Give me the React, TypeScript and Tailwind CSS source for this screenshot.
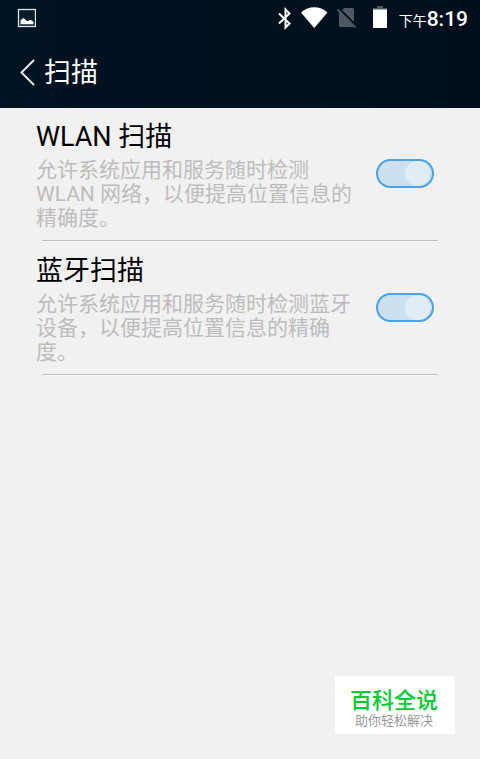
import { useState } from 'react';

type ScanSetting = {
  id: string;
  title: string;
  summary: string;
};

const settings: ScanSetting[] = [
  {
    id: 'wlan-scan',
    title: 'WLAN 扫描',
    summary: '允许系统应用和服务随时检测 WLAN 网络，以便提高位置信息的精确度。',
  },
  {
    id: 'bluetooth-scan',
    title: '蓝牙扫描',
    summary: '允许系统应用和服务随时检测蓝牙设备，以便提高位置信息的精确度。',
  },
];

function StatusBar() {
  return (
    <div className="flex h-9 items-center justify-between pr-3 pl-4 text-white">
      <svg className="h-5 w-5" viewBox="0 0 20 20" aria-hidden="true">
        <rect x="2.5" y="1.5" width="17" height="17" fill="#0a1c29" stroke="#dfe5e7" strokeWidth="1.3" />
        <path d="M4 16H18V17.3H4Z" fill="#4c5962" />
        <path d="M4.5 16V12.5L6 11L7.5 10L9 11.3L10.5 13L12 13L14 12L16 12.5L17.5 14V16Z" fill="#fff" />
      </svg>
      <div className="flex items-center">
        <svg className="h-6 w-4" viewBox="0 0 16 24" fill="none" stroke="#fff" strokeWidth="2" aria-hidden="true">
          <path d="M3 7.5L13.5 17.5L9.5 21.5V3.5L13.5 7.5L3 17.5" />
        </svg>
        <svg className="ml-2 h-6 w-7" viewBox="0 0 28 24" aria-hidden="true">
          <path d="M1 6.5C8.5 -0.5 20 -0.5 27.5 6.5L14.2 22Z" fill="#fff" />
        </svg>
        <svg className="ml-2 h-6 w-5" viewBox="0 0 20 24" aria-hidden="true">
          <path d="M8 2H16.5Q18 2 18 3.5V19.5Q18 21 16.5 21H4.5Q3 21 3 19.5V7Z" fill="#4c5962" />
          <path d="M2.5 2L20 19.5" stroke="#000f1e" strokeWidth="2" />
          <path d="M1.5 3.5L19.5 21.5" stroke="#4c5962" strokeWidth="1.8" />
        </svg>
        <svg className="ml-4 h-6 w-4" viewBox="0 0 16 24" aria-hidden="true">
          <path d="M5 0H11V2H15V4H1V2H5Z" fill="#4c5962" />
          <path d="M1 3.5H15V22H1Z" fill="#fff" />
        </svg>
        <span className="ml-2 flex items-baseline pt-[3px] pl-[3px] leading-6">
          <span className="text-[14px]">下午</span>
          <span className="text-[21px] font-medium">8:19</span>
        </span>
      </div>
    </div>
  );
}

function SettingRow({ setting }: { setting: ScanSetting }) {
  const [enabled, setEnabled] = useState(true);

  return (
    <li>
      <div className="flex gap-4 pt-[13px] pr-[46px] pb-[10px] pl-9">
        <div className="min-w-0 flex-1">
          <label htmlFor={setting.id} className="block text-[27px] leading-8 text-black">
            {setting.title}
          </label>
          <p id={`${setting.id}-summary`} className="mt-[5px] text-[21px] leading-6 text-[#bdbdbd]">
            {setting.summary}
          </p>
        </div>
        <span className="relative mt-[38px] block h-[29px] w-[58px] shrink-0">
          <input
            id={setting.id}
            type="checkbox"
            role="switch"
            aria-describedby={`${setting.id}-summary`}
            checked={enabled}
            onChange={(e) => setEnabled(e.target.checked)}
            className="peer block h-full w-full appearance-none rounded-full border-2 border-[#c4c4c4] bg-[#e4e4e4] checked:border-[#4aa3e8] checked:bg-[#cce0f0]"
          />
          <span className="pointer-events-none absolute top-[2px] left-1 h-[25px] w-[25px] rounded-full bg-[#e1ecf5] peer-checked:right-1 peer-checked:left-auto" />
        </span>
      </div>
      <div className="mr-[42px] ml-[42px] h-[2px] border-t border-[#b7bfbf] bg-[#fafafa]" />
    </li>
  );
}

export default function App() {
  return (
    <div className="min-h-screen bg-[#f1f1f1] font-[Roboto,'Noto_Sans_CJK_SC',sans-serif]">
      <header className="h-27 bg-linear-to-r from-[#001322] to-[#000f1e]">
        <StatusBar />
        <div className="flex h-18 items-center pl-5 text-white">
          <button type="button" aria-label="返回" className="mr-2 h-7 w-4">
            <svg className="h-7 w-4" viewBox="0 0 16 28" fill="none" stroke="#e9edef" strokeWidth="2" aria-hidden="true">
              <path d="M14 2L1.5 14.5L14 27" />
            </svg>
          </button>
          <h1 className="pt-[2px] text-[27px] leading-8">扫描</h1>
        </div>
      </header>

      <main>
        <ul>
          {settings.map((setting) => (
            <SettingRow key={setting.id} setting={setting} />
          ))}
        </ul>
      </main>

      {/* Site badge */}
      <aside className="fixed right-[25px] bottom-[25px] flex h-[58px] w-[120px] flex-col items-center justify-center bg-white pt-2 pr-[2px]">
        <strong className="text-[22px] leading-6 font-medium text-[#00cc33]">百科全说</strong>
        <span className="text-[13px] leading-4 text-[#999999]">助你轻松解决</span>
      </aside>
    </div>
  );
}
